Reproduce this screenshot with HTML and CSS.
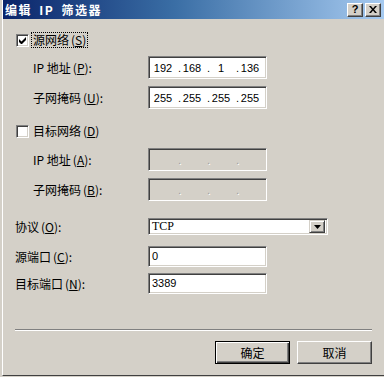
FILE: index.html
```html
<!DOCTYPE html>
<html lang="zh-CN">
<head>
    <meta charset="UTF-8" />
    <title>编辑 IP 筛选器</title>
    <link rel="stylesheet" href="styles.css">
</head>
<body>

<div class="window">

    <!-- 标题栏 -->
    <div class="title-bar">
        <span class="title-text">编辑 IP 筛选器</span>
        <div class="title-buttons">
            <span class="tb-btn">?</span>
            <span class="tb-btn">
                <svg width="8" height="7" viewBox="0 0 8 7"><path d="M0 0h2l2 2.5L6 0h2L5 3.5 8 7H6L4 4.5 2 7H0l3-3.5z" fill="#000"/></svg>
            </span>
        </div>
    </div>

    <!-- 内容 -->
    <div class="dialog-body">

        <div class="row row-check first">
            <span class="checkbox checked">
                <svg width="7" height="7" viewBox="0 0 7 7"><path d="M0 2v3l2 2h1l4-4V0L2.5 4.5z" fill="#000"/></svg>
            </span>
            <span class="check-label focused">源网络<span class="acc">(<u>S</u>)</span></span>
        </div>

        <div class="row row-field indent gap-8">
            <span class="label">IP 地址<span class="acc">(<u>P</u>):</span></span>
            <div class="field ip-field">
                <span class="octet">192</span><span class="dot">.</span>
                <span class="octet">168</span><span class="dot">.</span>
                <span class="octet">1</span><span class="dot">.</span>
                <span class="octet">136</span>
            </div>
        </div>

        <div class="row row-field indent gap-7">
            <span class="label">子网掩码<span class="acc">(<u>U</u>):</span></span>
            <div class="field ip-field">
                <span class="octet">255</span><span class="dot">.</span>
                <span class="octet">255</span><span class="dot">.</span>
                <span class="octet">255</span><span class="dot">.</span>
                <span class="octet">255</span>
            </div>
        </div>

        <div class="row row-check gap-14">
            <span class="checkbox"></span>
            <span class="check-label">目标网络<span class="acc">(<u>D</u>)</span></span>
        </div>

        <div class="row row-field indent gap-9">
            <span class="label">IP 地址<span class="acc">(<u>A</u>):</span></span>
            <div class="field ip-field disabled">
                <span class="octet"></span><span class="dot">.</span>
                <span class="octet"></span><span class="dot">.</span>
                <span class="octet"></span><span class="dot">.</span>
                <span class="octet"></span>
            </div>
        </div>

        <div class="row row-field indent gap-7">
            <span class="label">子网掩码<span class="acc">(<u>B</u>):</span></span>
            <div class="field ip-field disabled">
                <span class="octet"></span><span class="dot">.</span>
                <span class="octet"></span><span class="dot">.</span>
                <span class="octet"></span><span class="dot">.</span>
                <span class="octet"></span>
            </div>
        </div>

        <div class="row row-combo gap-17">
            <span class="label wide">协议<span class="acc">(<u>O</u>):</span></span>
            <div class="combo">
                <span class="combo-text">TCP</span>
                <span class="combo-btn">
                    <svg width="7" height="4" viewBox="0 0 7 4"><path d="M0 0h7L3.5 4z" fill="#000"/></svg>
                </span>
            </div>
        </div>

        <div class="row row-port gap-11">
            <span class="label wide">源端口<span class="acc">(<u>C</u>):</span></span>
            <div class="field port-field">0</div>
        </div>

        <div class="row row-port gap-6">
            <span class="label wide">目标端口<span class="acc">(<u>N</u>):</span></span>
            <div class="field port-field">3389</div>
        </div>

        <div class="separator"></div>

        <div class="button-row">
            <button class="btn default">确定</button>
            <button class="btn">取消</button>
        </div>

    </div>
</div>

</body>
</html>
```

FILE: styles.css
```css
/* 页面 */
* {
    box-sizing: border-box;
    margin: 0;
    padding: 0;
}

body {
    width: 384px;
    height: 377px;
    overflow: hidden;
    background: #d4d0c8;
    font-family: "Noto Sans CJK SC", sans-serif;
    font-size: 12px;
    color: #000;
}

/* 窗口外框 */
.window {
    margin-left: 2px;
    height: 376px;
    border-left: 1px solid #fff;
    border-bottom: 1px solid #404040;
    display: flex;
    flex-direction: column;
}

/* 标题栏 */
.title-bar {
    height: 19px;
    background: linear-gradient(90deg, #0a246a 0%, #3a6ea5 45%, #a6caf0 100%);
    display: flex;
    align-items: center;
    justify-content: space-between;
    padding: 0 3px 0 2px;
}
.title-text {
    color: #fff;
    font-weight: bold;
    font-size: 12px;
    line-height: 14px;
    letter-spacing: 1.5px;
    word-spacing: 3px;
}
.title-buttons {
    display: flex;
    gap: 2px;
}
.tb-btn {
    width: 16px;
    height: 14px;
    background: #d4d0c8;
    border: 1px solid;
    border-color: #fff #404040 #404040 #fff;
    box-shadow: inset -1px -1px #808080;
    display: flex;
    align-items: center;
    justify-content: center;
    font-family: "Liberation Sans", sans-serif;
    font-weight: bold;
    font-size: 11px;
    line-height: 1;
}

/* 内容区 */
.dialog-body {
    flex: 1;
    display: flex;
    flex-direction: column;
    padding: 0 12px 0 12px;
}

.row {
    display: flex;
    align-items: center;
}
.row.first { margin-top: 13px; }
.gap-6 { margin-top: 6px; }
.gap-7 { margin-top: 7px; }
.gap-8 { margin-top: 8px; }
.gap-9 { margin-top: 9px; }
.gap-11 { margin-top: 11px; }
.gap-14 { margin-top: 14px; }
.gap-17 { margin-top: 17px; }

.row-check {
    height: 16px;
    padding-left: 1px;
}
.row-field { height: 23px; }
.row-combo { height: 17px; }
.row-port { height: 21px; }

.indent { padding-left: 18px; }

.label {
    width: 115px;
    white-space: nowrap;
}
.label.wide { width: 133px; }

/* 快捷键部分 */
.acc {
    margin-left: 2px;
}

/* 复选框 */
.checkbox {
    width: 13px;
    height: 13px;
    background: #fff;
    border: 1px solid;
    border-color: #808080 #fff #fff #808080;
    box-shadow: inset 1px 1px #404040, inset -1px -1px #d4d0c8;
    display: flex;
    align-items: center;
    justify-content: center;
}
.check-label {
    margin-left: 2px;
    padding: 0 1px;
    height: 16px;
    line-height: 14px;
    border: 1px solid transparent;
}
.check-label.focused {
    border: 1px dotted #000;
}

/* 输入框 */
.field {
    height: 100%;
    background: #fff;
    border: 1px solid;
    border-color: #808080 #fff #fff #808080;
    box-shadow: inset 1px 1px #404040, inset -1px -1px #d4d0c8;
}
.ip-field {
    width: 119px;
    display: flex;
    align-items: center;
    padding-left: 3px;
    font-family: "Liberation Sans", sans-serif;
    font-size: 11px;
    color: #000;
}
.octet {
    width: 22px;
    text-align: center;
}
.dot {
    width: 7px;
    text-align: right;
}
.ip-field.disabled {
    background: #d4d0c8;
}
.ip-field.disabled .dot {
    color: #a0a0a0;
    text-shadow: 1px 1px #fff;
}

.port-field {
    width: 119px;
    padding: 2px 0 0 3px;
    font-family: "Liberation Sans", sans-serif;
    font-size: 11px;
    line-height: 15px;
}

/* 下拉框 */
.combo {
    width: 180px;
    height: 100%;
    background: #fff;
    border: 1px solid;
    border-color: #808080 #fff #fff #808080;
    box-shadow: inset 1px 1px #404040, inset -1px -1px #d4d0c8;
    display: flex;
    align-items: center;
    justify-content: space-between;
    padding: 2px 2px 2px 3px;
}
.combo-text {
    font-family: "Liberation Serif", serif;
    font-size: 12px;
    line-height: 13px;
}
.combo-btn {
    width: 16px;
    height: 13px;
    background: #d4d0c8;
    border: 1px solid;
    border-color: #d4d0c8 #404040 #404040 #d4d0c8;
    box-shadow: inset 1px 1px #fff, inset -1px -1px #808080;
    display: flex;
    align-items: center;
    justify-content: center;
}

/* 分隔线 */
.separator {
    margin-top: 35px;
    height: 2px;
    border-top: 1px solid #808080;
    border-bottom: 1px solid #fff;
}

/* 按钮 */
.button-row {
    margin-top: 10px;
    display: flex;
    justify-content: flex-end;
    gap: 7px;
}
.btn {
    width: 75px;
    height: 23px;
    background: #d4d0c8;
    font-family: "Noto Sans CJK SC", sans-serif;
    font-size: 12px;
    color: #000;
    border: 1px solid;
    border-color: #fff #404040 #404040 #fff;
    box-shadow: inset -1px -1px #808080;
    cursor: pointer;
}
.btn.default {
    border: 1px solid #000;
    box-shadow: inset 1px 1px #fff, inset -1px -1px #404040, inset -2px -2px #808080;
}
```
